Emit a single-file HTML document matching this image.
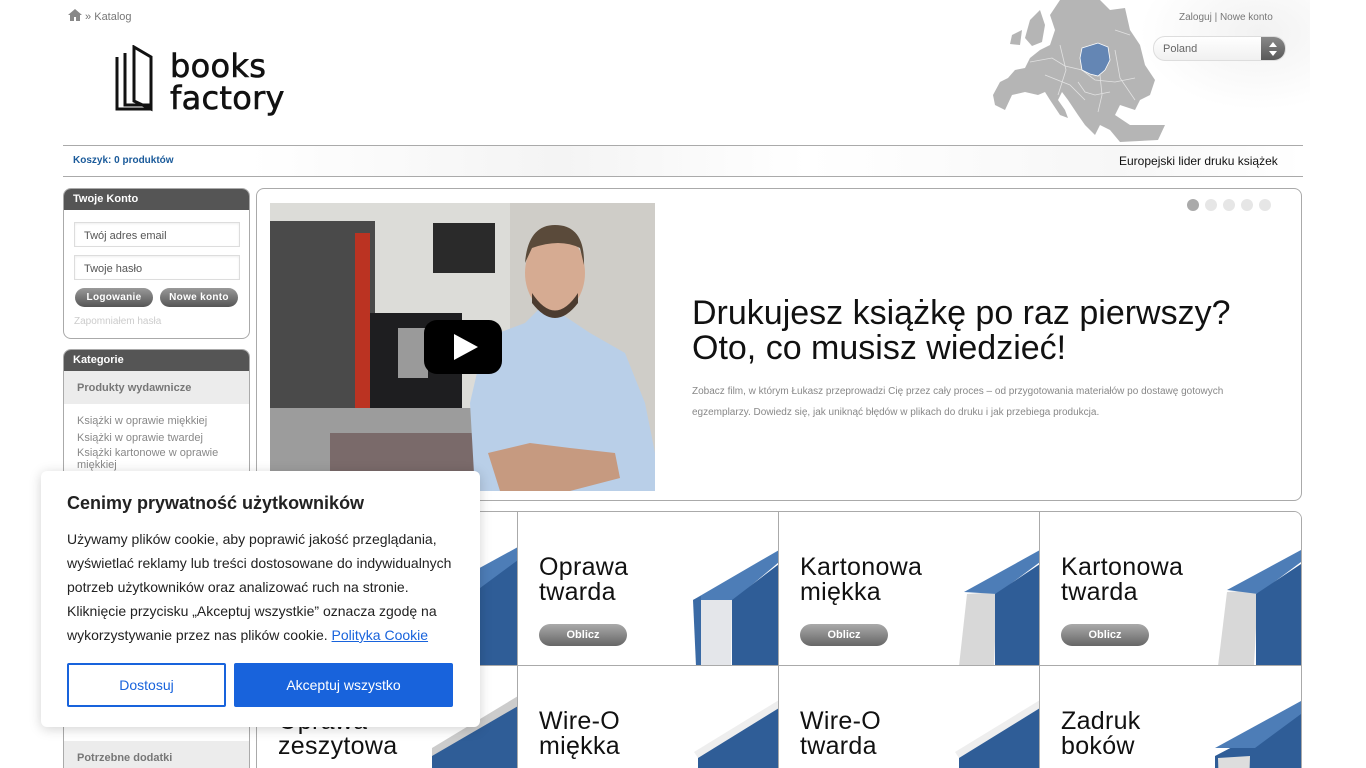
<!DOCTYPE html>
<html><head><meta charset="utf-8"><style>
*{box-sizing:border-box;margin:0;padding:0}
html,body{width:1366px;height:768px;overflow:hidden}
body{background:#fff;font-family:"Liberation Sans",sans-serif;position:relative}
.abs{position:absolute}
.crumb{left:68px;top:9px;font-size:11px;color:#777}
.hdrline{left:63px;width:1240px;height:1px;background:#aaa}
.bar{left:63px;top:146px;width:1240px;height:30px;background:linear-gradient(90deg,#fff 15%,#f4f4f4 40%,#fff 60%,#f7f7f7 85%,#fff)}
.box{border:1px solid #aaa;border-radius:8px;background:#fff;overflow:hidden}
.bh{background:#555;color:#fff;font-size:11px;font-weight:bold;padding:4px 9px;height:21px}
.inp{position:absolute;left:10px;width:166px;height:25px;border:1px solid #ddd;font-size:11px;color:#555;padding:7px 9px;box-shadow:inset 0 1px 2px #eee}
.gbtn{position:absolute;height:19px;border-radius:10px;background:linear-gradient(#999,#555);color:#fff;font-size:10px;font-weight:bold;text-align:center;line-height:19px;letter-spacing:.3px}
.cell{position:absolute;width:261px;height:154px;border-right:1px solid #aaa;border-bottom:1px solid #aaa;overflow:hidden;background:#fff}
.cell.b{height:103px;border-bottom:none}
.cell h3{position:absolute;left:21px;top:43px;font-weight:normal;font-size:25px;line-height:25px;color:#111;letter-spacing:.3px;font-family:"Liberation Sans",sans-serif}
.ob{position:absolute;left:21px;top:112px;width:88px;height:22px;border-radius:11px;background:linear-gradient(#aaa,#666);color:#fff;font-weight:bold;font-size:11px;text-align:center;line-height:22px}
.cell svg{position:absolute;left:0;top:0}
</style></head><body>

<div class="abs crumb"><svg width="14" height="12" viewBox="0 0 14 12" style="vertical-align:-1px"><path d="M7 0L0 6h2v6h4V8h2v4h4V6h2z" fill="#888"/></svg> » Katalog</div>

<svg class="abs" style="left:115px;top:45px" width="40" height="68" viewBox="0 0 40 68">
<path d="M2 12V64H36" stroke="#111" stroke-width="3" fill="none"/>
<path d="M10 8V60H36" stroke="#111" stroke-width="3" fill="none"/>
<path d="M19 2L36 12V64L19 56Z" stroke="#111" stroke-width="3" fill="none"/>
</svg>
<div class="abs" style="left:170px;top:50px;font-size:32px;line-height:32px;color:#111;font-family:'DejaVu Sans','Liberation Sans',sans-serif;letter-spacing:.3px;-webkit-text-stroke:.6px #111">books<br>factory</div>

<svg class="abs" style="left:990px;top:0" width="320" height="145" viewBox="0 0 320 145">
<defs><radialGradient id="bgw" cx="0.7" cy="0.3" r="0.7"><stop offset="0" stop-color="#f2f2f2"/><stop offset="1" stop-color="#fff"/></radialGradient></defs>
<rect x="150" y="0" width="170" height="110" fill="url(#bgw)"/>
<path d="M70 0L110 0 120 10 135 8 140 30 150 45 155 65 165 80 160 95 150 100 145 110 130 105 125 115 140 125 175 125 168 140 130 142 120 130 110 125 105 135 95 125 88 115 78 100 72 92 68 100 75 110 78 118 70 115 60 100 55 92 48 95 35 92 22 95 15 110 5 105 3 95 10 82 18 78 25 70 35 68 40 58 50 50 60 45 65 30 60 15Z" fill="#b5b5b5"/>
<path d="M40 20L50 10 55 25 52 42 42 46 35 38Z" fill="#b5b5b5"/>
<path d="M22 35L32 30 30 45 20 44Z" fill="#b5b5b5"/>
<g stroke="#e2e2e2" stroke-width=".8" fill="none"><path d="M40 62L62 58 75 66 92 70 105 80 125 82 145 78"/><path d="M70 45L76 70 68 95"/><path d="M110 75 112 95 108 112"/><path d="M55 75 80 85 95 100"/><path d="M125 50 130 78 145 100"/><path d="M88 82 95 92 105 95 120 92"/><path d="M125 30 140 35"/></g>
<path d="M92 48L108 43 118 47 120 60 115 70 108 76 100 74 92 70 90 58Z" fill="#6486b4" stroke="#fff" stroke-width=".8"/>
</svg>
<div class="abs" style="left:1179px;top:12px;font-size:10px;color:#777">Zaloguj | Nowe konto</div>
<div class="abs" style="left:1153px;top:36px;width:133px;height:25px;border:1px solid #ddd;border-radius:12px;background:linear-gradient(#fff,#f0f0f0);font-size:11px;color:#666;padding:6px 9px;overflow:hidden">Poland
<div style="position:absolute;right:0;top:0;width:24px;height:25px;background:linear-gradient(#888,#555)"><svg width="24" height="24" viewBox="0 0 24 24"><path d="M8 10l4-5 4 5zM8 14l4 5 4-5z" fill="#fff"/></svg></div></div>

<div class="abs hdrline" style="top:145px"></div>
<div class="abs bar"></div>
<div class="abs hdrline" style="top:176px"></div>
<div class="abs" style="left:73px;top:155px;font-size:10px;font-weight:bold;color:#1a5a9a">Koszyk: 0 produktów</div>
<div class="abs" style="left:1119px;top:154px;font-size:12px;color:#111">Europejski lider druku książek</div>

<div class="abs box" style="left:63px;top:188px;width:187px;height:151px">
<div class="bh">Twoje Konto</div>
<div class="inp" style="top:33px">Twój adres email</div>
<div class="inp" style="top:66px">Twoje hasło</div>
<div class="gbtn" style="left:11px;top:99px;width:78px">Logowanie</div>
<div class="gbtn" style="left:96px;top:99px;width:78px">Nowe konto</div>
<div style="position:absolute;left:10px;top:127px;font-size:10px;color:#ccc">Zapomniałem hasła</div>
</div>

<div class="abs box" style="left:63px;top:349px;width:187px;height:419px;border-bottom:none;border-radius:8px 8px 0 0">
<div class="bh">Kategorie</div>
<div style="background:#ececec;height:33px;font-size:11px;font-weight:bold;color:#777;padding:11px 13px">Produkty wydawnicze</div>
<div style="font-size:11px;color:#888;padding:9px 13px;line-height:17px">Książki w oprawie miękkiej<br>Książki w oprawie twardej<br><span style="line-height:12px;display:block">Książki kartonowe w oprawie miękkiej</span></div>
<div style="position:absolute;top:391px;left:0;right:0;background:#ececec;height:28px;font-size:11px;font-weight:bold;color:#777;padding:11px 13px 0">Potrzebne dodatki</div>
</div>

<div class="abs box" style="left:256px;top:188px;width:1046px;height:313px">
<div style="position:absolute;left:13px;top:14px;width:385px;height:288px;overflow:hidden;background:#d9d9d6">
<svg width="385" height="288" viewBox="0 0 385 288">
<rect width="385" height="288" fill="#dcdcd8"/>
<rect x="240" y="0" width="145" height="288" fill="#cfcdc8"/>
<rect x="0" y="18" width="105" height="190" fill="#4a4a4a"/>
<rect x="85" y="30" width="15" height="178" fill="#b32"/>
<rect x="100" y="110" width="92" height="110" fill="#1e1e20"/>
<rect x="128" y="125" width="30" height="50" fill="#9a9a9a"/>
<rect x="163" y="20" width="62" height="50" fill="#2a2a2a"/>
<rect x="0" y="205" width="215" height="83" fill="#9c9c9c"/>
<rect x="60" y="230" width="150" height="58" fill="#7a6a6a"/>
<rect x="340" y="260" width="45" height="28" fill="#aaa"/>
<path d="M205 288L200 200 215 135 255 120 270 105 290 110 320 130 355 150 375 200 385 250 385 288Z" fill="#b9cfe8"/>
<path d="M218 250L260 240 300 245 345 250 350 275 300 288 230 288Z" fill="#c69a80"/>
<ellipse cx="285" cy="70" rx="30" ry="40" fill="#d6ab92"/>
<path d="M255 60Q258 22 285 22Q315 22 314 62L310 45Q290 35 262 45Z" fill="#5a4a3a"/>
<path d="M262 90Q285 125 308 90L308 100Q285 130 262 100Z" fill="#4c3c30"/>
</svg>
<div style="position:absolute;left:154px;top:117px;width:78px;height:54px;background:#000;border-radius:13px"><svg width="78" height="54"><path d="M30 14L54 27 30 40Z" fill="#fff"/></svg></div>
</div>
<div style="position:absolute;left:930px;top:9px">
<span style="display:inline-block;width:12px;height:12px;border-radius:6px;background:#aaa;margin-right:6px"></span><span style="display:inline-block;width:12px;height:12px;border-radius:6px;background:#e6e6e6;margin-right:6px"></span><span style="display:inline-block;width:12px;height:12px;border-radius:6px;background:#e6e6e6;margin-right:6px"></span><span style="display:inline-block;width:12px;height:12px;border-radius:6px;background:#e6e6e6;margin-right:6px"></span><span style="display:inline-block;width:12px;height:12px;border-radius:6px;background:#e6e6e6"></span></div>
<div style="position:absolute;left:435px;top:107px;font-size:34px;line-height:35px;color:#111">Drukujesz książkę po raz pierwszy?<br>Oto, co musisz wiedzieć!</div>
<div style="position:absolute;left:435px;top:192px;width:590px;font-size:10px;line-height:21px;color:#888">Zobacz film, w którym Łukasz przeprowadzi Cię przez cały proces – od przygotowania materiałów po dostawę gotowych egzemplarzy. Dowiedz się, jak uniknąć błędów w plikach do druku i jak przebiega produkcja.</div>
</div>

<div class="abs" style="left:256px;top:511px;width:1046px;height:257px;border:1px solid #aaa;border-bottom:none;border-radius:8px 8px 0 0;overflow:hidden">
<div class="cell" style="left:0;top:0"><h3>Oprawa<br>miękka</h3><div class="ob">Oblicz</div><svg width="261" height="154"><path d="M215 80L261 45 261 154 215 154Z" fill="#2f5d97"/><path d="M175 82L261 35 261 48 215 82Z" fill="#4d7db7"/></svg></div>
<div class="cell" style="left:261px;top:0"><h3>Oprawa<br>twarda</h3><div class="ob">Oblicz</div><svg width="261" height="154"><path d="M180 154L179 86 214 85 213 154Z" fill="#e4e6ea"/><path d="M175 88L261 38 261 50 216 88Z" fill="#4d7db7"/><path d="M214 88L261 52 261 154 214 154Z" fill="#2f5d97"/><path d="M175 88L183 84 183 154 178 154Z" fill="#3a6aa5"/></svg></div>
<div class="cell" style="left:522px;top:0"><h3>Kartonowa<br>miękka</h3><div class="ob">Oblicz</div><svg width="261" height="154"><path d="M180 154L188 82 218 80 215 154Z" fill="#d8d8d8"/><path d="M185 80L261 38 261 50 218 82Z" fill="#4d7db7"/><path d="M216 82L261 52 261 154 216 154Z" fill="#2f5d97"/></svg></div>
<div class="cell" style="left:783px;top:0;border-right:none"><h3>Kartonowa<br>twarda</h3><div class="ob">Oblicz</div><svg width="261" height="154"><path d="M178 154L187 80 218 78 214 154Z" fill="#d8d8d8"/><path d="M187 78L261 38 261 50 218 82Z" fill="#4d7db7"/><path d="M216 82L261 52 261 154 216 154Z" fill="#2f5d97"/></svg></div>
<div class="cell b" style="left:0;top:154px"><h3>Oprawa<br>zeszytowa</h3><svg width="261" height="103"><path d="M175 88L261 38 261 154 175 154Z" fill="#2f5d97"/><path d="M175 82L261 30 261 40 175 90Z" fill="#ccc"/></svg></div>
<div class="cell b" style="left:261px;top:154px"><h3>Wire-O<br>miękka</h3><svg width="261" height="103"><path d="M180 90L261 40 261 154 180 154Z" fill="#2f5d97"/><path d="M176 86L261 34 261 42 180 92Z" fill="#eee"/></svg></div>
<div class="cell b" style="left:522px;top:154px"><h3>Wire-O<br>twarda</h3><svg width="261" height="103"><path d="M180 90L261 40 261 154 180 154Z" fill="#2f5d97"/><path d="M176 86L261 34 261 42 180 92Z" fill="#eee"/></svg></div>
<div class="cell b" style="left:783px;top:154px;border-right:none"><h3>Zadruk<br>boków</h3><svg width="261" height="103"><path d="M175 90L261 45 261 154 175 154Z" fill="#2f5d97"/><path d="M175 82L261 35 261 48 215 82Z" fill="#4d7db7"/><path d="M178 92L210 90 208 154 180 154Z" fill="#ddd"/></svg></div>
</div>

<div class="abs" style="left:41px;top:471px;width:439px;height:256px;background:#fff;border-radius:6px;box-shadow:0 2px 12px rgba(0,0,0,.18)">
<div style="position:absolute;left:26px;top:22px;font-size:18px;font-weight:bold;color:#222">Cenimy prywatność użytkowników</div>
<div style="position:absolute;left:26px;top:56px;width:400px;font-size:14px;line-height:24px;color:#222">Używamy plików cookie, aby poprawić jakość przeglądania, wyświetlać reklamy lub treści dostosowane do indywidualnych potrzeb użytkowników oraz analizować ruch na stronie. Kliknięcie przycisku „Akceptuj wszystkie” oznacza zgodę na wykorzystywanie przez nas plików cookie. <span style="color:#1863dc;text-decoration:underline">Polityka Cookie</span></div>
<div style="position:absolute;left:26px;top:192px;width:159px;height:44px;border:2px solid #1863dc;border-radius:2px;color:#1863dc;font-size:14px;text-align:center;line-height:40px">Dostosuj</div>
<div style="position:absolute;left:193px;top:192px;width:219px;height:44px;background:#1863dc;border-radius:2px;color:#fff;font-size:14px;text-align:center;line-height:44px">Akceptuj wszystko</div>
</div>
</body></html>
